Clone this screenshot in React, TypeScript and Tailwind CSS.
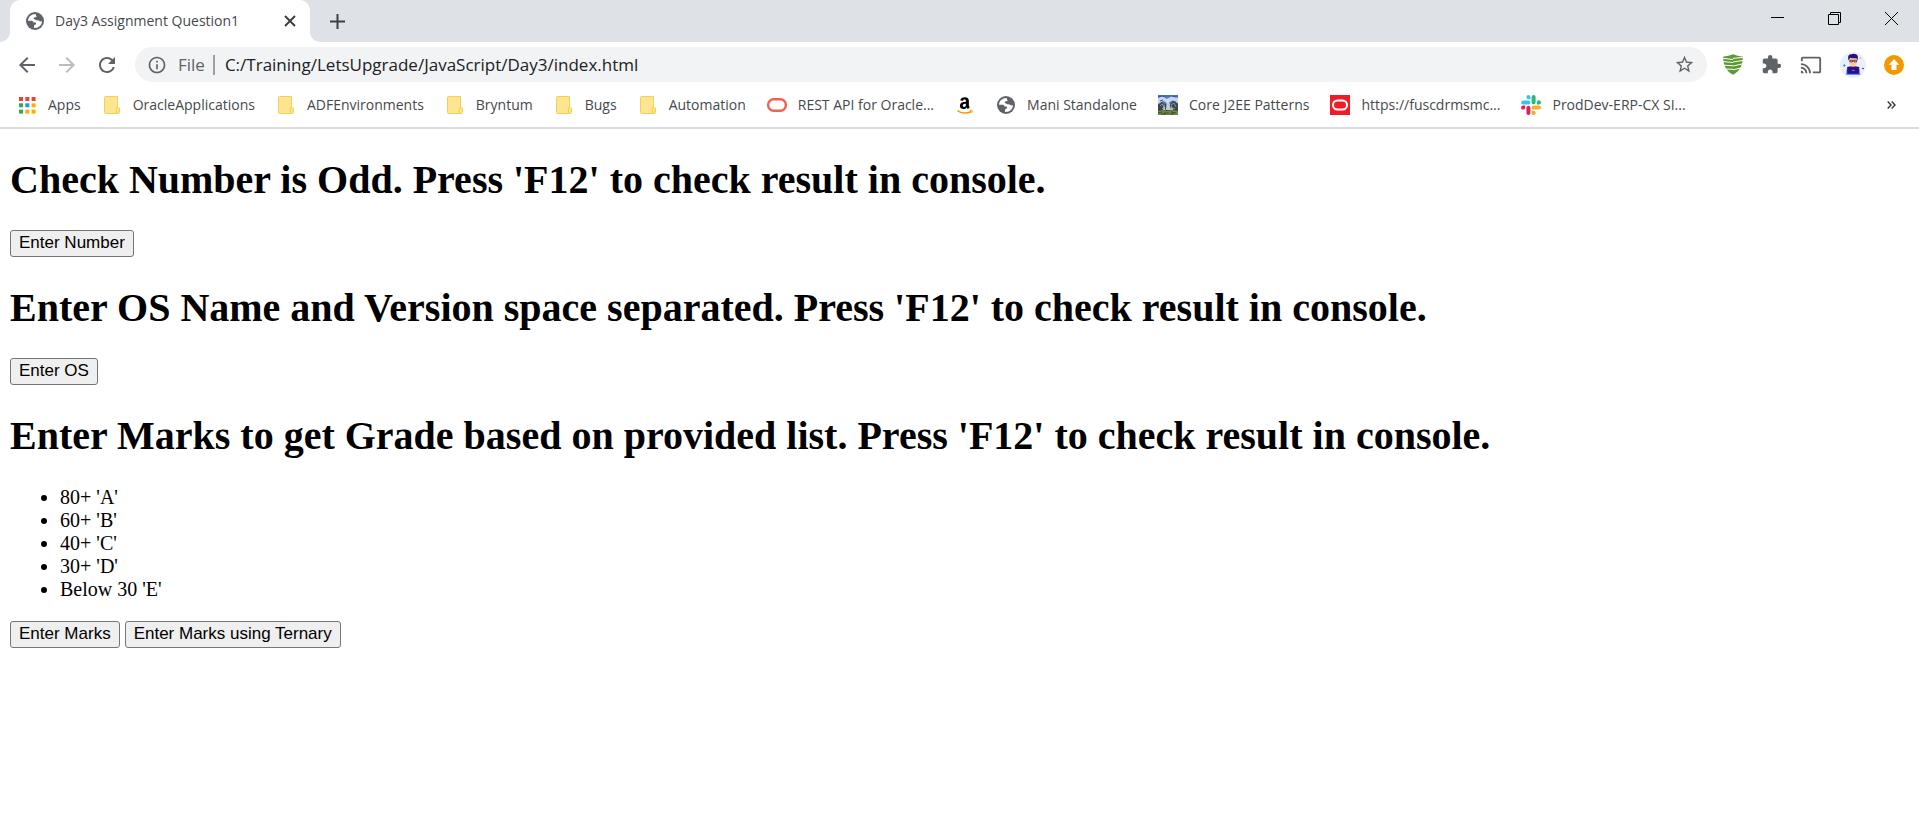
import React from "react";
import {
  MdArrowBack, MdArrowForward, MdRefresh, MdInfoOutline, MdStarBorder, MdExtension, MdCast,
} from "react-icons/md";

function Globe() {
  return (
    <svg viewBox="0 0 18 18" className="size-[18px]" aria-hidden="true">
      <circle cx="9" cy="9" r="9" fill="#5f6368" />
      <path
        d="M9.6 2 C5.2 2 2 5 2 8.8 L5.6 8.8 C6.8 8.9 7.3 9.6 7.5 10.5 L9.8 10.6 L10.2 12.2 L8.2 13 L8 15.9 C12.4 16.4 16 13 16 9.2 L14.2 9.6 L12.8 8.4 L10.4 8.2 L7.6 6.8 L8 5.4 L10.6 5 Z"
        fill="#fff"
      />
    </svg>
  );
}

function Folder() {
  return (
    <svg viewBox="0 0 16 18" className="h-[18px] w-4" aria-hidden="true">
      <path d="M.5 1.5a1 1 0 0 1 1-1h12v11.2h1a1 1 0 0 1 1 1v3.8a1 1 0 0 1-1 1h-13a1 1 0 0 1-1-1z" fill="#ffe58f" stroke="#f2cf5b" />
      <path d="M12.4 17v-4.300a1.100 1.100 0 0 1 1.100-1.100" fill="none" stroke="#f7cf3c" />
    </svg>
  );
}

function Apps() {
  const colors = ["#ea4335", "#ea4335", "#ea4335", "#34a853", "#1a9bf0", "#fbb000", "#34a853", "#fbb000", "#fbb000"];
  return (
    <svg viewBox="0 0 17 17" className="size-[17px]" aria-hidden="true">
      {colors.map((c, i) => (
        <rect key={i} x={(i % 3) * 6.3} y={Math.floor(i / 3) * 6.3} width="4" height="4" fill={c} />
      ))}
    </svg>
  );
}

function OracleRing() {
  return (
    <svg viewBox="0 0 20 14" className="h-3.5 w-5" aria-hidden="true">
      <rect x="1.2" y="1.2" width="17.6" height="11.6" rx="5.4" fill="none" stroke="#ee6352" strokeWidth="2.4" />
    </svg>
  );
}

function OracleSquare() {
  return (
    <svg viewBox="0 0 20 20" className="size-5" aria-hidden="true">
      <rect width="20" height="20" fill="#ee1c24" />
      <rect x="3" y="5.5" width="14" height="9" rx="4.5" fill="none" stroke="#fff" strokeWidth="2" />
    </svg>
  );
}

function Amazon() {
  return (
    <svg viewBox="0 0 16 18" className="h-[18px] w-4" aria-hidden="true">
      <path
        transform="translate(.6 .9) scale(.93)"
        d="M9 5.3V4.5C9 3.300 8.600 2.700 7.600 2.700 6.700 2.700 6.100 3.200 5.900 4.200L2.900 3.900C3.300 1.600 5.100.4 7.800.4c2.900 0 4.300 1.400 4.300 4v4.400c0 1 .3 1.600 1 2.300l-2 1.900c-.7-.5-1.100-1-1.400-1.600C8.800 12.600 7.700 13.100 6.300 13.100 4 13.100 2.500 11.700 2.500 9.500 2.500 6.700 4.700 5.400 9 5.300zM9 7.300C6.600 7.300 5.600 8 5.600 9.300c0 .9.500 1.500 1.300 1.500C8.300 10.800 9 9.600 9 7.900z"
        fill="#000"
      />
      <path d="M.5 14.600C4.500 17.700 10.500 17.800 14.200 15.500" fill="none" stroke="#f90" strokeWidth="1.500" />
      <path d="M12.600 14.400c1.300-.4 2.700-.2 2.600.4 0 .9-.3 1.500-.9 2.200" fill="none" stroke="#f90" />
    </svg>
  );
}

function Fountain() {
  return (
    <svg viewBox="0 0 20 20" className="size-5" aria-hidden="true">
      <rect width="20" height="20" fill="#4f6fae" />
      <path d="M0 3l5-2 4 3 5-3 6 2v5l-6-2-5 2-4-2-5 3z" fill="#c4d5ef" />
      <path d="M0 2l4-1 3 1M13 1l5 1M2 6l3-1M14 6l4 1" stroke="#3558a0" fill="none" />
      <path d="M0 10l4-3 2 3 3-2 3 2 3-4 5 3v10H0z" fill="#3b4742" />
      <path d="M2 11l2-2 2 3M13 10l3-2 2 4M4 14l2-2M14 13l3 1" stroke="#8796a5" fill="none" />
      <path d="M8 15l.5-8L10 2l1 4 2 9z" fill="#dbe4ef" opacity=".85" />
      <path d="M5 15l1-6 1.500 6zM13 15l.5-5 1.500 5z" fill="#b9c4d0" />
      <path d="M0 16l5-1 4 1 5-1 6 1v4H0z" fill="#6f8747" />
      <path d="M0 18l4-1M6 18h5M13 17l5 1M3 19h5M12 19h4" stroke="#3d4d2b" />
    </svg>
  );
}

function Slack() {
  return (
    <svg viewBox="0 0 20 20" className="size-5" aria-hidden="true" strokeWidth="4" strokeLinecap="round">
      <path d="M2.100 7.400h5.200" stroke="#36c5f0" />
      <path d="M12.600 2.100v5.200" stroke="#2eb67d" />
      <path d="M7.400 12.700v5.200" stroke="#e01e5a" />
      <path d="M12.700 12.600h5.200" stroke="#ecb22e" />
      <path d="M7.400 0a2.100 2.100 0 0 0 0 4.200h2.100V2.100A2.100 2.100 0 0 0 7.400 0z" fill="#36c5f0" />
      <path d="M20 7.400a2.100 2.100 0 0 0-4.200 0v2.100h2.100A2.100 2.100 0 0 0 20 7.400z" fill="#2eb67d" />
      <path d="M12.600 20a2.100 2.100 0 0 0 0-4.200h-2.100v2.100a2.100 2.100 0 0 0 2.100 2.100z" fill="#ecb22e" />
      <path d="M0 12.600a2.100 2.100 0 0 0 4.200 0v-2.100H2.100A2.100 2.100 0 0 0 0 12.600z" fill="#e01e5a" />
    </svg>
  );
}

function Shield() {
  return (
    <svg viewBox="0 0 20 21" className="h-[21px] w-5" aria-hidden="true">
      <path d="M.3 2.500C4 2.500 7 1.500 10 .3c3 1.200 6 2.200 9.700 2.200C20 11 17 17 10 20.700 3 17 0 11 .3 2.500z" fill="#5c9a31" />
      <path
        d="M0 4.300l10 1.200M0 7.600l10 .9M1 11.200l9 .6M2.500 15l7.500.3M10 4.400l10-1M10 8l10-1.600M10 12l9-2M10 15.800l7.500-1.800"
        stroke="#fff"
        strokeWidth="1"
        fill="none"
      />
    </svg>
  );
}

function Avatar() {
  return (
    <svg viewBox="0 0 26 26" className="size-[26px]" aria-hidden="true">
      <circle cx="13" cy="13" r="13" fill="#e8f0fc" />
      <path d="M6.500 22c-.5-4.500 1-7.500 4.500-8h4c3.500.5 5 3.500 4.500 8z" fill="#3f7dfb" />
      <path d="M11 12.500h4V15l-2 1.500-2-1.500z" fill="#f7b267" />
      <path d="M9.200 5.500h7.800v4.700c0 2.400-1.700 4.100-3.900 4.100s-3.900-1.700-3.900-4.100z" fill="#ffcb8e" />
      <path d="M8.600 8.500C7.500 4.500 8.500 2.600 11 2.300c3-1.200 6.700-.3 6.900 2.500.1 1.300-.1 2.500-.5 3.700l-.9-2.300c-2 .3-4.600.2-6.300-.5z" fill="#2b1077" />
      <path d="M9.800 8.200h2.600v1.700H9.800zM14 8.200h2.600v1.700H14zM12.400 8.800H14" fill="none" stroke="#2b1077" strokeWidth=".7" />
      <rect x="7.200" y="14.800" width="12" height="7.200" rx=".8" fill="#2e0f8a" />
      <path d="M12 18.400h2.600" stroke="#8f9dff" strokeWidth=".8" />
      <path d="M6 22.300h14.500" stroke="#3f7dfb" />
      <path d="M4.300 12.200v2.600M3 13.500h2.600" stroke="#3f7dfb" strokeWidth=".9" />
      <circle cx="20.300" cy="6" r=".9" fill="#ffb04d" />
      <circle cx="23" cy="16.500" r=".8" fill="#2e0f83" />
    </svg>
  );
}

function Update() {
  return (
    <svg viewBox="0 0 20 20" className="size-5" aria-hidden="true">
      <circle cx="10" cy="10" r="10" fill="#f29900" />
      <path d="M10 4l5.200 5.700h-2.700V15h-5V9.700H4.800z" fill="#fff" />
    </svg>
  );
}

const bookmarks: { label: string; text?: string; icon: React.ReactNode }[] = [
  { label: "Apps", text: "Apps", icon: <Apps /> },
  { label: "OracleApplications", text: "OracleApplications", icon: <Folder /> },
  { label: "ADFEnvironments", text: "ADFEnvironments", icon: <Folder /> },
  { label: "Bryntum", text: "Bryntum", icon: <Folder /> },
  { label: "Bugs", text: "Bugs", icon: <Folder /> },
  { label: "Automation", text: "Automation", icon: <Folder /> },
  { label: "REST API for Oracle", text: "REST API for Oracle...", icon: <OracleRing /> },
  { label: "Amazon", icon: <Amazon /> },
  { label: "Mani Standalone", text: "Mani Standalone", icon: <Globe /> },
  { label: "Core J2EE Patterns", text: "Core J2EE Patterns", icon: <Fountain /> },
  { label: "fuscdrmsmc", text: "https://fuscdrmsmc...", icon: <OracleSquare /> },
  { label: "ProdDev-ERP-CX", text: "ProdDev-ERP-CX SI...", icon: <Slack /> },
];

function TabStrip() {
  return (
    <div className="flex h-[42px] items-stretch justify-between bg-[#dee1e6]">
      <div className="flex items-stretch">
        <svg viewBox="0 0 10 10" className="size-2.5 self-end" aria-hidden="true">
          <path d="M10 0v10H0A10 10 0 0 0 10 0z" fill="#fff" />
        </svg>
        <div className="flex w-[300px] items-center rounded-t-[10px] bg-white pr-3 pl-4">
          <Globe />
          <span className="ml-[11px] flex-1 pb-0.5 text-[14px] text-[#45494d]">Day3 Assignment Question1</span>
          <button aria-label="Close tab" className="flex size-4 items-center justify-center text-[#3c4043]">
            <svg viewBox="0 0 12 12" className="size-3" aria-hidden="true">
              <path d="M1 1l10 10M11 1L1 11" stroke="currentColor" strokeWidth="2" />
            </svg>
          </button>
        </div>
        <svg viewBox="0 0 10 10" className="size-2.5 self-end" aria-hidden="true">
          <path d="M0 0v10h10A10 10 0 0 1 0 0z" fill="#fff" />
        </svg>
        <button aria-label="New tab" className="ml-[9px] flex w-4 items-center justify-center text-[#3c4043]">
          <svg viewBox="0 0 15 15" className="size-[15px] shrink-0" aria-hidden="true">
            <path d="M7.500 0v15M0 7.500h15" stroke="currentColor" strokeWidth="2" />
          </svg>
        </button>
      </div>
      <div className="flex items-center gap-11 pr-[21px] pb-1.5 text-black">
        <button aria-label="Minimize">
          <svg viewBox="0 0 13 13" className="size-[13px]" aria-hidden="true"><path d="M0 5.500h13" stroke="currentColor" /></svg>
        </button>
        <button aria-label="Restore">
          <svg viewBox="0 0 13 13" className="size-[13px]" aria-hidden="true">
            <path d="M.5 2.500h10v10H.5zM2.500 2.500v-2h10v10h-2" stroke="currentColor" fill="none" />
          </svg>
        </button>
        <button aria-label="Close">
          <svg viewBox="0 0 13 13" className="size-[13px]" aria-hidden="true"><path d="M0 0l13 13M13 0L0 13" stroke="currentColor" /></svg>
        </button>
      </div>
    </div>
  );
}

function Toolbar() {
  return (
    <div className="flex h-[45px] items-center bg-white pr-[15px] pl-[15px] text-[#5f6368]">
      <div className="flex items-center gap-4">
        <button aria-label="Back"><MdArrowBack className="size-6" /></button>
        <button aria-label="Forward" className="text-[#babcbe]"><MdArrowForward className="size-6" /></button>
        <button aria-label="Reload"><MdRefresh className="size-6" /></button>
      </div>
      <div className="ml-4 flex h-[35px] flex-1 items-center rounded-full bg-[#f1f3f4] pr-3 pl-3">
        <MdInfoOutline className="size-5" />
        <span className="ml-[11px] text-[17px]">File</span>
        <span className="ml-2 h-5 w-0.5 bg-[#9aa0a6]" />
        <input
          aria-label="Address"
          defaultValue="C:/Training/LetsUpgrade/JavaScript/Day3/index.html"
          className="ml-2.5 min-w-0 flex-1 bg-transparent text-[17px] text-[#202124] outline-none"
        />
        <button aria-label="Bookmark this page"><MdStarBorder className="size-[21px]" /></button>
      </div>
      <div className="ml-4 flex items-center gap-[18px]">
        <button aria-label="Shield extension"><Shield /></button>
        <button aria-label="Extensions"><MdExtension className="size-[21px]" /></button>
        <button aria-label="Cast"><MdCast className="size-[22px]" /></button>
        <button aria-label="Profile"><Avatar /></button>
        <button aria-label="Update"><Update /></button>
      </div>
    </div>
  );
}

function BookmarksBar() {
  return (
    <nav aria-label="Bookmarks" className="flex h-[42px] items-center gap-[21px] border-b-2 border-[#dadce0] bg-white pr-[23px] pb-1 pl-[17px] text-[14px] text-[#45494d]">
      {bookmarks.map((b) => (
        <a key={b.label} href="#" aria-label={b.label} className="flex shrink-0 items-center gap-[11px] whitespace-nowrap">
          <span className="flex w-5 justify-center">{b.icon}</span>
          {b.text && <span className="pb-0.5">{b.text}</span>}
        </a>
      ))}
      <button aria-label="More bookmarks" className="ml-auto">
        <svg viewBox="0 0 9 8" className="h-2 w-[9px]" aria-hidden="true">
          <path d="M.7.500L4 4 .7 7.500M4.700.500L8 4 4.700 7.500" stroke="#3c4043" strokeWidth="1.500" fill="none" />
        </svg>
      </button>
    </nav>
  );
}

function Heading({ children }: { children: React.ReactNode }) {
  return <h1 className="mt-7 mb-[27px] text-[40px] leading-[46px] font-bold">{children}</h1>;
}

function PageButton({ children }: { children: React.ReactNode }) {
  return (
    <button className="h-[27px] rounded-[3px] border border-[#767676] bg-[#efefef] px-2 pb-0.5 font-['Liberation_Sans',Arial,sans-serif] text-[17px] leading-5">
      {children}
    </button>
  );
}

export default function App() {
  return (
    <div className="min-h-screen bg-white font-['Open_Sans','Noto_Sans',sans-serif]">
      <header>
        <TabStrip />
        <Toolbar />
        <BookmarksBar />
      </header>
      <main className="flow-root px-2.5 font-['Liberation_Serif','Times_New_Roman',serif] text-[20px] leading-[23px] text-black">
        <Heading>Check Number is Odd. Press 'F12' to check result in console.</Heading>
        <div className="flex">
          <PageButton>Enter Number</PageButton>
        </div>
        <Heading>Enter OS Name and Version space separated. Press 'F12' to check result in console.</Heading>
        <div className="flex">
          <PageButton>Enter OS</PageButton>
        </div>
        <Heading>Enter Marks to get Grade based on provided list. Press 'F12' to check result in console.</Heading>
        <ul className="mb-5 list-disc pl-[50px]">
          <li>80+ 'A'</li>
          <li>60+ 'B'</li>
          <li>40+ 'C'</li>
          <li>30+ 'D'</li>
          <li>Below 30 'E'</li>
        </ul>
        <div className="flex gap-[5px]">
          <PageButton>Enter Marks</PageButton>
          <PageButton>Enter Marks using Ternary</PageButton>
        </div>
      </main>
    </div>
  );
}
